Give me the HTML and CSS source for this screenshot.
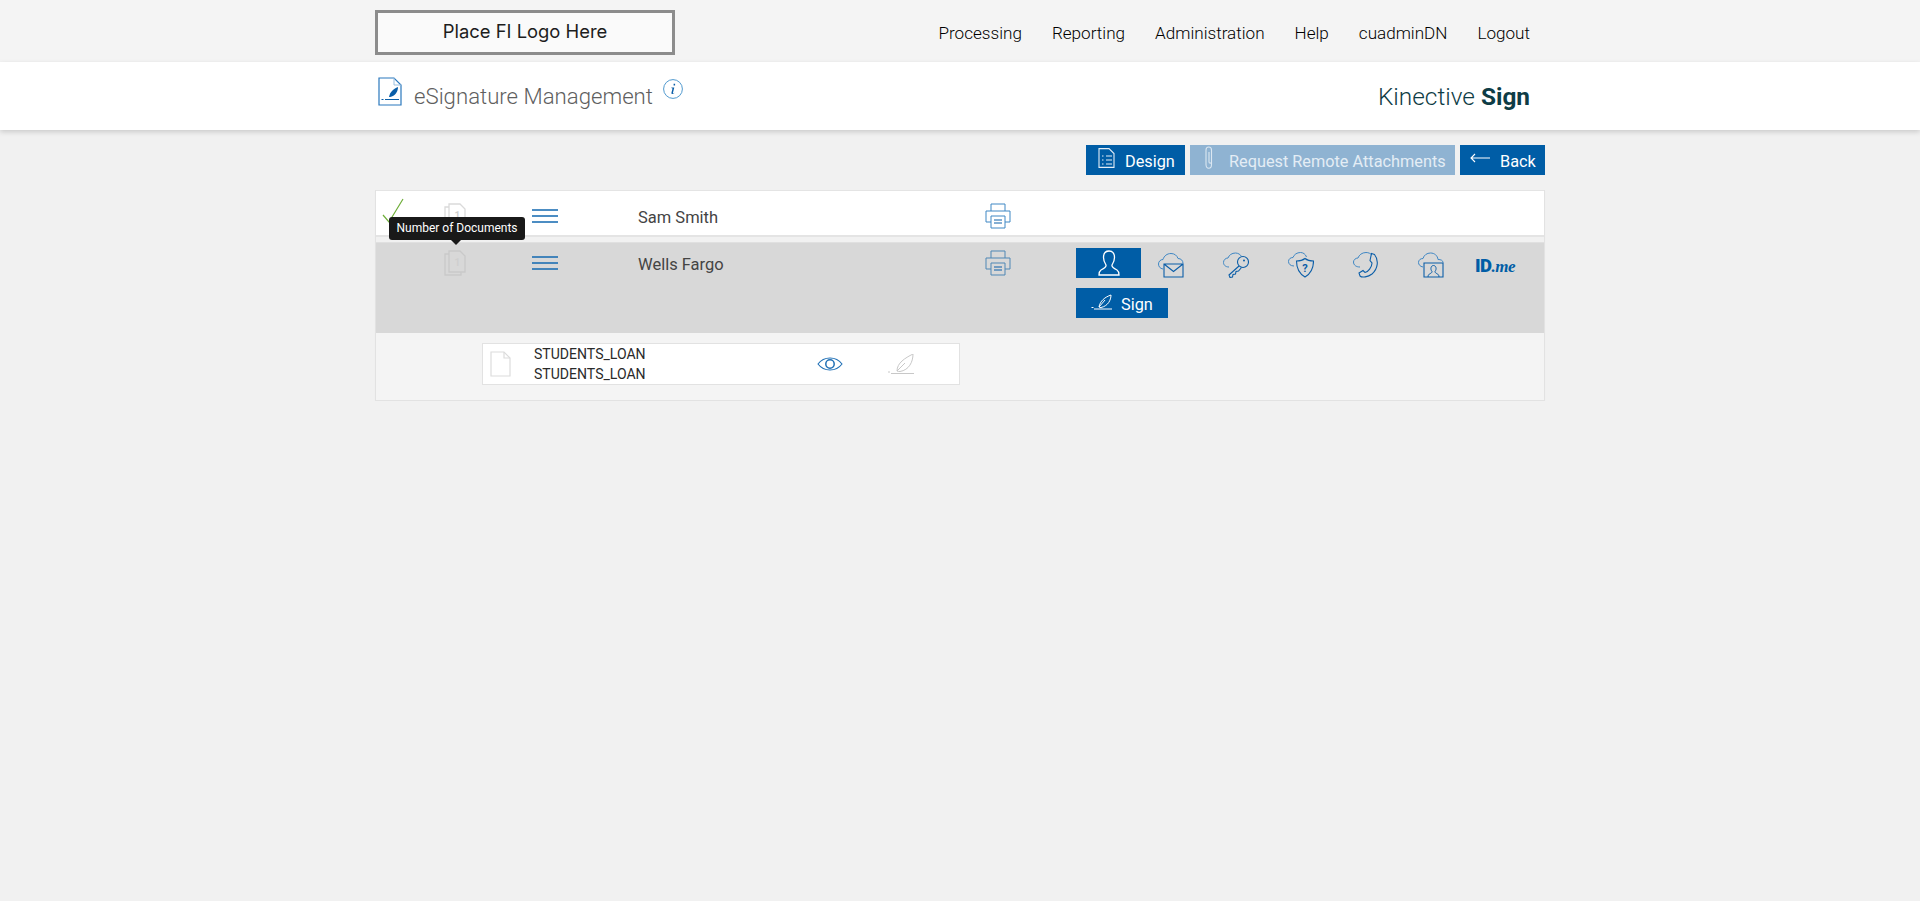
FILE: index.html
```html
<!DOCTYPE html>
<html>
<head>
  <title>eSignature Management</title>
  <link rel="stylesheet" href="styles.css">
</head>
<body>
  <header class="top-bar">
    <div class="container top-inner">
      <div class="fi-logo">Place FI Logo Here</div>
      <nav class="main-nav">
        <a>Processing</a>
        <a>Reporting</a>
        <a>Administration</a>
        <a>Help</a>
        <a>cuadminDN</a>
        <a>Logout</a>
      </nav>
    </div>
  </header>

  <div class="title-bar">
    <div class="container title-inner">
      <svg class="title-icon" viewBox="0 0 24 29" fill="none">
        <path d="M1 1H16L23 8V28H1Z" stroke="#2a78bd" stroke-width="1.2"/>
        <path d="M16 1V8H23" stroke="#9cc0e0" stroke-width="1"/>
        <path d="M11 20C12 15 15 12 20 10C20 15 17 19 12 20Z" fill="#0b5ea8"/>
        <path d="M7 22.500H21M3.500 22.500H5.500" stroke="#0b5ea8" stroke-width="1.2"/>
      </svg>
      <h1 class="page-title">eSignature Management</h1>
      <svg class="info-icon" viewBox="0 0 20 20" fill="none">
        <circle cx="10" cy="10" r="9.4" stroke="#3c8dc8" stroke-width="0.9"/>
        <path d="M10.600 4.800h1.500v1.600h-1.500zM8.400 8.600h2.900l-1.400 5.400c0 .4.4.4 1.300-.3l.2.4c-1.200 1-3 1.500-3-.1l1.100-4.600-1.200-.3z" fill="#0b5ea8"/>
      </svg>
      <div class="brand">Kinective <b>Sign</b></div>
    </div>
  </div>

  <main class="container">
    <div class="toolbar">
      <button class="btn btn-design">
        <svg class="btn-icon" viewBox="0 0 17 20" fill="none" stroke="#e3edf6" stroke-width="1.1">
          <path d="M1 .6H11L16 5.600V19.400H1Z"/><path d="M4 8H5.500M8 8H14M4 12H5.500M8 12H14M4 16H5.500M8 16H14"/>
        </svg>
        Design
      </button>
      <button class="btn btn-disabled">
        <svg class="btn-icon clip" viewBox="0 0 10 24" fill="none" stroke="#dbe7f1" stroke-width="1.1">
          <path d="M7.500 6V18.500C7.500 23.500 2 23.500 2 18.500V4C2 0 7.500 0 7.500 4V16C7.500 17.500 5 17.500 5 16V6"/>
        </svg>
        Request Remote Attachments
      </button>
      <button class="btn btn-back">
        <svg class="btn-icon back" viewBox="0 0 20 10" fill="none" stroke="#fff" stroke-width="1.1">
          <path d="M20 5H1M5 1L1 5L5 9"/>
        </svg>
        Back
      </button>
    </div>

    <div class="signer-list">
      <div class="signer-row">
        <div class="cell-check">
          <svg class="check-icon" viewBox="0 0 22 26" fill="none">
            <path d="M1 17L7 24L21 1" stroke="#6fae3a" stroke-width="1.2"/>
          </svg>
        </div>
        <div class="cell-docs">
          <svg class="docs-icon" viewBox="0 0 22 26" fill="none" stroke="#dadada" stroke-width="1.3">
            <path d="M5 1H16L21 6V22H5Z"/><path d="M5 4H1V25H17V22"/>
            <text x="10.500" y="16" class="docs-count">1</text>
          </svg>
          <span class="tooltip">Number of Documents</span>
        </div>
        <div class="cell-menu">
          <svg class="menu-icon" viewBox="0 0 26 14" stroke="#1268b0" stroke-width="1.3"><path d="M0 1H26M0 7H26M0 13H26"/></svg>
        </div>
        <div class="cell-name">Sam Smith</div>
        <div class="cell-print">
          <svg class="print-icon" viewBox="0 0 26 26" fill="none" stroke="#3f87c4" stroke-width="1">
            <path d="M6 8V1H20V8"/><path d="M6 19H1V8H25V19H20"/><path d="M6 13H20V25H6Z" fill="#fff"/>
            <path d="M9 17H17M9 20H17" stroke="#0b5ea8"/>
          </svg>
        </div>
      </div>

      <div class="signer-row signer-active">
        <div class="cell-check"></div>
        <div class="cell-docs">
          <svg class="docs-icon" viewBox="0 0 22 26" fill="none" stroke="#c9c9c9" stroke-width="1.3">
            <path d="M5 1H16L21 6V22H5Z"/><path d="M5 4H1V25H17V22"/>
            <text x="10.500" y="16" class="docs-count">1</text>
          </svg>
        </div>
        <div class="cell-menu">
          <svg class="menu-icon" viewBox="0 0 26 14" stroke="#1268b0" stroke-width="1.3"><path d="M0 1H26M0 7H26M0 13H26"/></svg>
        </div>
        <div class="cell-name">Wells Fargo</div>
        <div class="cell-print">
          <svg class="print-icon" viewBox="0 0 26 26" fill="none" stroke="#4f87b5" stroke-width="1">
            <path d="M6 8V1H20V8"/><path d="M6 19H1V8H25V19H20"/><path d="M6 13H20V25H6Z"/>
            <path d="M9 17H17M9 20H17" stroke="#0b5ea8"/>
          </svg>
        </div>
        <div class="cell-auth">
          <div class="auth-methods">
            <span class="auth-on">
              <svg class="person-icon" viewBox="0 0 22 26" fill="none" stroke="#fff" stroke-width="1.3">
                <path d="M11 1C7 1 5.500 4 5.500 7.500C5.500 11 7 13.500 8 15C8.500 17 6 18.500 3 20C1.500 21 1 22.500 1 25H21C21 22.500 20.500 21 19 20C16 18.500 13.500 17 14 15C15 13.500 16.500 11 16.500 7.500C16.500 4 15 1 11 1Z"/>
              </svg>
            </span>
            <span class="auth-item">
              <svg class="cloud-icon" viewBox="0 0 26 26" fill="none">
                <path d="M5 17C2 16.500 .5 14.500 .5 12C.5 9.500 2.500 7.500 5 7.500C6 4 9 1.500 13 1.500C16.500 1.500 19 3.500 20 6.500C23 6.500 25 8.500 25 11.500" stroke="#3f87c4"/>
                <path d="M6 12H25V25H6ZM6 12L15.500 19.500L25 12" stroke="#0b5ea8" stroke-width="1.1"/>
              </svg>
            </span>
            <span class="auth-item">
              <svg class="cloud-icon" viewBox="0 0 26 26" fill="none">
                <path d="M6 15C2 15 .5 12.500 .5 10.500C.5 8 2.500 6 5 6C6 3 9 1 12.500 1C15 1 17.500 2.500 18.500 4.500" stroke="#3f87c4"/>
                <circle cx="20" cy="10" r="5.500" stroke="#0b5ea8" stroke-width="1.1"/>
                <circle cx="21" cy="8.500" r="1" fill="#0b5ea8"/>
                <path d="M16 14L6 23L7 25.500L9.500 25L10 22.500L12.500 22L13 19.500L15.500 19L18.500 15.500" stroke="#0b5ea8" stroke-width="1.1"/>
              </svg>
            </span>
            <span class="auth-item">
              <svg class="cloud-icon" viewBox="0 0 26 26" fill="none">
                <path d="M6 14C2.500 14 .5 12 .5 9.500C.5 7 2.500 5.500 5 5.500C6 2.500 9 .5 12.500 .5C15 .5 17.500 2 18.500 5" stroke="#3f87c4"/>
                <path d="M8.500 9C12 9 14.500 8.500 17 6.500C19.500 8.500 22 9 25.500 9C25.500 16 23 21.500 17 25C11 21.500 8.500 16 8.500 9Z" stroke="#0b5ea8" stroke-width="1.1"/>
                <text x="17" y="19.500" class="shield-mark">?</text>
              </svg>
            </span>
            <span class="auth-item">
              <svg class="cloud-icon" viewBox="0 0 26 26" fill="none">
                <path d="M7 15C3 15 .5 13 .5 10C.5 8 2.500 6 5 6C6 3 9 .5 13 .5C15.500 .5 17.500 1.500 19 3" stroke="#3f87c4"/>
                <path d="M18.500 1.500L21.500 2.500C26 8 25 17 19 22C15 25 9 26 7 24L6 21L10 18.500L12 20.500C15 20 19 15 19 11L17 8.500Z" stroke="#0b5ea8" stroke-width="1.1"/>
              </svg>
            </span>
            <span class="auth-item">
              <svg class="cloud-icon" viewBox="0 0 26 26" fill="none">
                <path d="M5 15C2 14.500 .5 12.500 .5 10.500C.5 8 2.500 6.500 5 6.500C6 3 9 1 12.500 1C16.500 1 19.500 3.500 20 7.500C23 7.500 25 8.500 25 10.500" stroke="#3f87c4"/>
                <path d="M6 11H25V25H6Z" stroke="#0b5ea8" stroke-width="1.1"/>
                <path d="M10 25C10 21 14 22 14 19.500C12 17 13 13.500 15.500 13.500C18 13.500 19 17 17 19.500C17 22 21 21 21 25" stroke="#0b5ea8"/>
              </svg>
            </span>
            <span class="id-me">ID<i>.me</i></span>
          </div>
          <button class="btn btn-sign">
            <svg class="sign-icon" viewBox="0 0 22 16" fill="none" stroke="#fff" stroke-width="1">
              <path d="M3 15H21M.5 13.500H2.500M8 13C9 7 14 3 20 1C20 6 17 12 10 13.500C9 13.500 8.500 13.500 8 13ZM8 13L14 6"/>
            </svg>
            Sign
          </button>
        </div>
      </div>

      <div class="doc-panel">
        <div class="doc-card">
          <svg class="doc-icon" viewBox="0 0 21 26" fill="none" stroke="#dcdcdc" stroke-width="1.2">
            <path d="M1 1H14L20 7V25H1Z"/><path d="M14 1V7H20"/>
          </svg>
          <div class="doc-names">
            <div>STUDENTS_LOAN</div>
            <div>STUDENTS_LOAN</div>
          </div>
          <svg class="eye-icon" viewBox="0 0 26 14" fill="none" stroke="#1f6fb5" stroke-width="1.1">
            <path d="M1 7C7 -1 19 -1 25 7C19 15 7 15 1 7Z"/><circle cx="13" cy="7" r="4.200" stroke-width="1.500"/>
          </svg>
          <svg class="quill-icon" viewBox="0 0 26 20" fill="none" stroke="#c8c8c8" stroke-width="1">
            <path d="M3 19.500H26M0 18H2"/>
            <path d="M9 17C9 9 17 4 25 0C25 8 21 16 12 17.500C11 17.500 10 17.500 9 17ZM9 17L17 9"/>
          </svg>
        </div>
      </div>
    </div>
  </main>
</body>
</html>
```

FILE: styles.css
```css
* {
  box-sizing: border-box;
}

body {
  margin: 0;
  background-color: #f1f1f1;
  font-family: Roboto, "Liberation Sans", sans-serif;
  color: #444;
}

.container {
  width: 1170px;
  margin: 0 auto;
}

/* top navigation */
.top-bar {
  height: 62px;
  background-color: #f4f4f4;
}

.top-inner {
  display: flex;
  align-items: flex-start;
  justify-content: space-between;
  padding: 10px 15px 0 0;
}

.fi-logo {
  width: 300px;
  height: 45px;
  border: 3px solid #8c8c8c;
  background-color: #fafafa;
  color: #1d1d1d;
  font-family: Inter, sans-serif;
  font-size: 18.4px;
  line-height: 37px;
  text-align: center;
}

.main-nav {
  display: flex;
  gap: 30px;
  padding-top: 12px;
  font-size: 17.1px;
  font-weight: 300;
  line-height: 22px;
  color: #000;
}

/* page title */
.title-bar {
  height: 68px;
  background-color: #fff;
  box-shadow: 0 2px 5px rgba(0, 0, 0, 0.16);
}

.title-inner {
  display: flex;
  align-items: flex-start;
  padding: 15px 15px 0 3px;
}

.title-icon {
  width: 24px;
  height: 29px;
}

.page-title {
  margin: 4px 0 0 12px;
  font-size: 22.2px;
  font-weight: 300;
  line-height: 30px;
  color: #5f5f5f;
}

.info-icon {
  width: 20px;
  height: 20px;
  margin: 2px 0 0 10px;
}

.brand {
  margin: 4px 0 0 auto;
  font-size: 24.4px;
  font-weight: 300;
  line-height: 32px;
  color: #0e3c45;
}

.brand b {
  font-weight: 700;
}

/* buttons */
.toolbar {
  display: flex;
  justify-content: flex-end;
  gap: 5px;
  margin-top: 15px;
}

.btn {
  display: flex;
  align-items: center;
  height: 30px;
  padding: 2px 0 0 10px;
  border: 0;
  background-color: #005da6;
  color: #fff;
  font-family: Roboto, sans-serif;
  font-size: 16.3px;
}

.btn-design {
  width: 99px;
  padding-left: 12px;
}

.btn-disabled {
  width: 265px;
  padding-left: 14px;
  background-color: #8fb3d2;
  color: #e4edf5;
}

.btn-back {
  width: 85px;
}

.btn-icon {
  width: 17px;
  height: 20px;
  margin: 0 10px 6px 0;
}

.btn-icon.clip {
  width: 10px;
  height: 24px;
  margin: 0 15px 6px 0;
}

.btn-icon.back {
  width: 20px;
  height: 10px;
  margin: 0 10px 6px 0;
}

/* signer rows */
.signer-list {
  margin-top: 15px;
  border: 1px solid #e2e2e2;
  border-top: 0;
  box-shadow: 0 1px 1px rgba(0, 0, 0, 0.04);
}

.signer-row {
  display: grid;
  grid-template-columns: 68px 88px 106px 347px 91px 1fr;
  height: 47px;
  border: solid #e4e4e4;
  border-width: 1px 0 2px;
  background-color: #fff;
}

.signer-active {
  height: 91px;
  margin-top: 5px;
  border: 0;
  border-top: 1px solid #e0e0e0;
  background-color: #d8d8d8;
}

.cell-check {
  padding: 7px 0 0 6px;
}

.check-icon {
  display: block;
  width: 22px;
  height: 26px;
}

.cell-docs {
  position: relative;
  padding-top: 12px;
}

.signer-active .cell-docs {
  padding-top: 7px;
}

.docs-icon {
  display: block;
  width: 22px;
  height: 26px;
}

.docs-count {
  fill: #cfcfcf;
  stroke: none;
  font-size: 10px;
  font-weight: 700;
}

.tooltip {
  position: absolute;
  top: 26px;
  left: -55px;
  width: 136px;
  height: 23px;
  border-radius: 3px;
  background-color: #191919;
  color: #fff;
  font-size: 12px;
  line-height: 23px;
  text-align: center;
  z-index: 2;
}

.tooltip::after {
  content: "";
  position: absolute;
  left: 62px;
  bottom: -5px;
  border: solid transparent;
  border-width: 5px 5px 0;
  border-top-color: #191919;
}

.cell-menu {
  padding-top: 18px;
}

.signer-active .cell-menu {
  padding-top: 13px;
}

.menu-icon {
  display: block;
  width: 26px;
  height: 14px;
}

.cell-name {
  padding-top: 16px;
  font-size: 16.5px;
  line-height: 22px;
}

.signer-active .cell-name {
  padding-top: 11px;
}

.cell-print {
  padding-top: 12px;
}

.signer-active .cell-print {
  padding-top: 7px;
}

.print-icon {
  display: block;
  width: 26px;
  height: 26px;
}

.cell-auth {
  padding-top: 5px;
}

.auth-methods {
  display: flex;
  align-items: center;
  height: 30px;
}

.auth-on {
  display: flex;
  align-items: center;
  justify-content: center;
  width: 65px;
  height: 30px;
  margin-right: 17px;
  background-color: #005da6;
}

.person-icon {
  width: 22px;
  height: 26px;
}

.auth-item {
  display: flex;
  width: 65px;
}

.cloud-icon {
  width: 26px;
  height: 26px;
  margin-top: 3px;
}

.shield-mark {
  fill: #0b5ea8;
  font-size: 11px;
  font-weight: 700;
  text-anchor: middle;
}

.id-me {
  margin: 6px 0 0 -8px;
  color: #005da6;
  font-size: 18.5px;
  font-weight: 900;
  letter-spacing: -0.5px;
}

.id-me i {
  font-family: "Liberation Serif", serif;
  font-size: 17px;
  font-weight: 700;
}

.btn-sign {
  width: 92px;
  margin-top: 10px;
  padding-left: 15px;
}

.sign-icon {
  width: 22px;
  height: 16px;
  margin: 0 8px 4px 0;
}

/* document list */
.doc-panel {
  height: 67px;
  padding: 10px 0 0 106px;
  background-color: #f4f4f4;
}

.doc-card {
  display: flex;
  align-items: center;
  width: 478px;
  height: 42px;
  padding: 0 0 0 7px;
  border: 1px solid #e2e2e2;
  background-color: #fff;
}

.doc-icon {
  width: 21px;
  height: 26px;
}

.doc-names {
  width: 283px;
  margin: 0 0 0 23px;
  color: #2a2a2a;
  font-size: 14.05px;
  line-height: 20px;
}

.eye-icon {
  width: 26px;
  height: 14px;
}

.quill-icon {
  width: 26px;
  height: 20px;
  margin-left: 45px;
}
```
